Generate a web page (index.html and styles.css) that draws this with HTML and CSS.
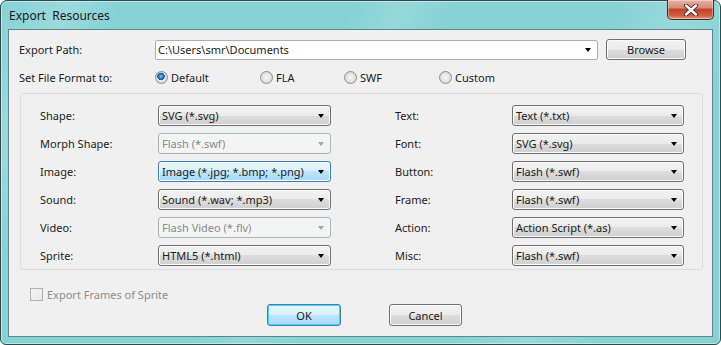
FILE: index.html
```html
<!DOCTYPE html>
<html lang="en">
<head>
<meta charset="UTF-8">
<title>Export Resources</title>
<link rel="stylesheet" href="styles.css">
</head>
<body>

<div class="window">
  <div class="titlebar">
    <span class="title">Export&nbsp; Resources</span>
    <button class="close">
      <svg width="16" height="12" viewBox="0 0 16 12">
        <path d="M3 1.5 L13 10.5 M13 1.5 L3 10.5" stroke="#3a2420" stroke-width="4.2" stroke-linecap="round"/>
        <path d="M3 1.5 L13 10.5 M13 1.5 L3 10.5" stroke="#ffffff" stroke-width="2.4" stroke-linecap="round"/>
      </svg>
    </button>
  </div>

  <div class="client">
    <div class="path-row">
      <span class="lbl">Export Path:</span>
      <div class="combo edit"><span>C:\Users\smr\Documents</span><i class="arrow"></i></div>
      <button class="btn">Browse</button>
    </div>

    <div class="format-row">
      <span class="format-label">Set File Format to:</span>
      <label class="radio checked w105"><i></i>Default</label>
      <label class="radio w84"><i></i>FLA</label>
      <label class="radio w95"><i></i>SWF</label>
      <label class="radio"><i></i>Custom</label>
    </div>

    <div class="group">
      <span class="lbl">Shape:</span>
      <div class="combo"><span>SVG (*.svg)</span><i class="arrow"></i></div>
      <span></span>
      <span class="lbl">Text:</span>
      <div class="combo"><span>Text (*.txt)</span><i class="arrow"></i></div>

      <span class="lbl">Morph Shape:</span>
      <div class="combo disabled"><span>Flash (*.swf)</span><i class="arrow"></i></div>
      <span></span>
      <span class="lbl">Font:</span>
      <div class="combo"><span>SVG (*.svg)</span><i class="arrow"></i></div>

      <span class="lbl">Image:</span>
      <div class="combo focus"><span>Image (*.jpg; *.bmp; *.png)</span><i class="arrow"></i></div>
      <span></span>
      <span class="lbl">Button:</span>
      <div class="combo"><span>Flash (*.swf)</span><i class="arrow"></i></div>

      <span class="lbl">Sound:</span>
      <div class="combo"><span>Sound (*.wav; *.mp3)</span><i class="arrow"></i></div>
      <span></span>
      <span class="lbl">Frame:</span>
      <div class="combo"><span>Flash (*.swf)</span><i class="arrow"></i></div>

      <span class="lbl">Video:</span>
      <div class="combo disabled"><span>Flash Video (*.flv)</span><i class="arrow"></i></div>
      <span></span>
      <span class="lbl">Action:</span>
      <div class="combo"><span>Action Script (*.as)</span><i class="arrow"></i></div>

      <span class="lbl">Sprite:</span>
      <div class="combo"><span>HTML5 (*.html)</span><i class="arrow"></i></div>
      <span></span>
      <span class="lbl">Misc:</span>
      <div class="combo"><span>Flash (*.swf)</span><i class="arrow"></i></div>
    </div>

    <label class="check disabled"><i></i>Export Frames of Sprite</label>

    <div class="actions">
      <button class="btn default">OK</button>
      <button class="btn">Cancel</button>
    </div>
  </div>
</div>

</body>
</html>
```

FILE: styles.css
```css
body {
  margin: 0;
  padding: 0;
  font-family: "Noto Sans", "Open Sans", sans-serif;
  font-size: 11px;
  color: #1b1b1b;
  background: #fff;
}
.window {
  box-sizing: border-box;
  width: 721px;
  height: 345px;
  display: flex;
  flex-direction: column;
  padding: 0 7px 7px;
  border: 1px solid #33494a;
  border-radius: 7px 7px 6px 6px;
  background:
    linear-gradient(115deg, transparent 0, rgba(255,255,255,0.18) 8%, transparent 14%,
      transparent 40%, rgba(255,255,255,0.14) 46%, transparent 52%,
      transparent 70%, rgba(255,255,255,0.16) 78%, transparent 86%),
    #85d2d5;
  box-shadow: inset 0 0 0 1px rgba(255,255,255,0.45);
}
.titlebar {
  height: 28px;
  display: flex;
  align-items: flex-start;
}
.title {
  margin: 6px 0 0 1px;
  font-size: 12px;
  color: #1a1a1a;
}
.close {
  margin-left: auto;
  margin-top: -1px;
  margin-right: -1px;
  width: 47px;
  height: 20px;
  padding: 0;
  display: flex;
  align-items: center;
  justify-content: center;
  border: 1px solid #4a2a24;
  border-top: none;
  border-radius: 0 0 5px 5px;
  background: linear-gradient(#e8b2a6 0%, #d88a78 40%, #c5432c 50%, #cf5c42 80%, #e49a7c 100%);
  box-shadow: inset 0 0 0 1px rgba(255,255,255,0.35);
}
.client {
  flex: 1;
  border: 1px solid #5f8587;
  background: #f0f0f0;
  padding: 9px 10px 0 10px;
}
.path-row {
  display: grid;
  grid-template-columns: 128px 443px 80px;
  column-gap: 8px;
  align-items: center;
  height: 21px;
}
.format-row {
  display: flex;
  align-items: center;
  height: 16px;
  margin-top: 9px;
}
.format-label {
  width: 136px;
}
.w105 { width: 105px; }
.w84 { width: 84px; }
.w95 { width: 95px; }
.radio {
  display: flex;
  align-items: center;
  gap: 3px;
}
.radio i {
  box-sizing: border-box;
  width: 13px;
  height: 13px;
  border-radius: 50%;
  border: 1px solid #8e8f8f;
  background: radial-gradient(circle at 50% 50%, #f8f8f8 0, #e0e0e0 55%, #cfcfcf 100%);
}
.radio.checked i {
  background:
    radial-gradient(circle at 45% 40%, #a6dcf9 0, #3a8fd0 1.5px, #16589b 3.5px, transparent 4px),
    radial-gradient(circle at 50% 50%, #f8f8f8 0, #e0e0e0 55%, #cfcfcf 100%);
}
.group {
  margin: 8px 0 0 1px;
  width: 683px;
  box-sizing: border-box;
  border: 1px solid #d5dfe5;
  border-radius: 3px;
  padding: 11px 0 3px 19px;
  display: grid;
  grid-template-columns: 118px 173px 64px 117px 172px;
  grid-auto-rows: 21px;
  row-gap: 7px;
  align-items: center;
}
.combo {
  box-sizing: border-box;
  height: 21px;
  display: flex;
  align-items: center;
  justify-content: space-between;
  padding: 0 6px 0 3px;
  border: 1px solid #707070;
  border-radius: 3px;
  background: linear-gradient(#f2f2f2 0%, #ebebeb 50%, #dddddd 50%, #cfcfcf 100%);
  box-shadow: inset 0 0 0 1px #fbfbfb;
  white-space: nowrap;
}
.combo.edit {
  height: 20px;
  padding-left: 2px;
  border: 1px solid #abadb3;
  border-radius: 2px;
  background: #fff;
  box-shadow: none;
}
.combo.focus {
  border-color: #3c7fb1;
  background: linear-gradient(#eaf6fd 0%, #d9f0fc 50%, #bee6fd 50%, #a7d9f5 100%);
}
.combo.disabled {
  border-color: #adb2b5;
  background: #f4f4f4;
  box-shadow: none;
  color: #8a8a8a;
}
.arrow {
  width: 0;
  height: 0;
  border-left: 3.5px solid transparent;
  border-right: 3.5px solid transparent;
  border-top: 4px solid #000;
}
.combo.disabled .arrow {
  border-top-color: #a6a6a6;
}
.btn {
  box-sizing: border-box;
  height: 21px;
  padding: 0;
  font: inherit;
  color: #1b1b1b;
  border: 1px solid #707070;
  border-radius: 3px;
  background: linear-gradient(#f2f2f2 0%, #ebebeb 50%, #dddddd 50%, #cfcfcf 100%);
  box-shadow: inset 0 0 0 1px #fbfbfb;
}
.btn.default {
  border-color: #3c7fb1;
  background: linear-gradient(#eaf6fd 0%, #d9f0fc 50%, #bee6fd 50%, #a7d9f5 100%);
  box-shadow: inset 0 0 0 1px #48d3f7;
}
.check {
  display: flex;
  align-items: center;
  gap: 4px;
  height: 13px;
  margin: 18px 0 0 11px;
  color: #8d8d8d;
}
.check i {
  box-sizing: border-box;
  width: 13px;
  height: 13px;
  border: 1px solid #b1b1b1;
  background: linear-gradient(135deg, #f4f4f4, #e6e6e6);
}
.actions {
  display: flex;
  gap: 48px;
  margin: 3px 0 0 248px;
}
.actions .btn {
  width: 74px;
  height: 22px;
}
.actions .btn + .btn {
  width: 73px;
}
```
